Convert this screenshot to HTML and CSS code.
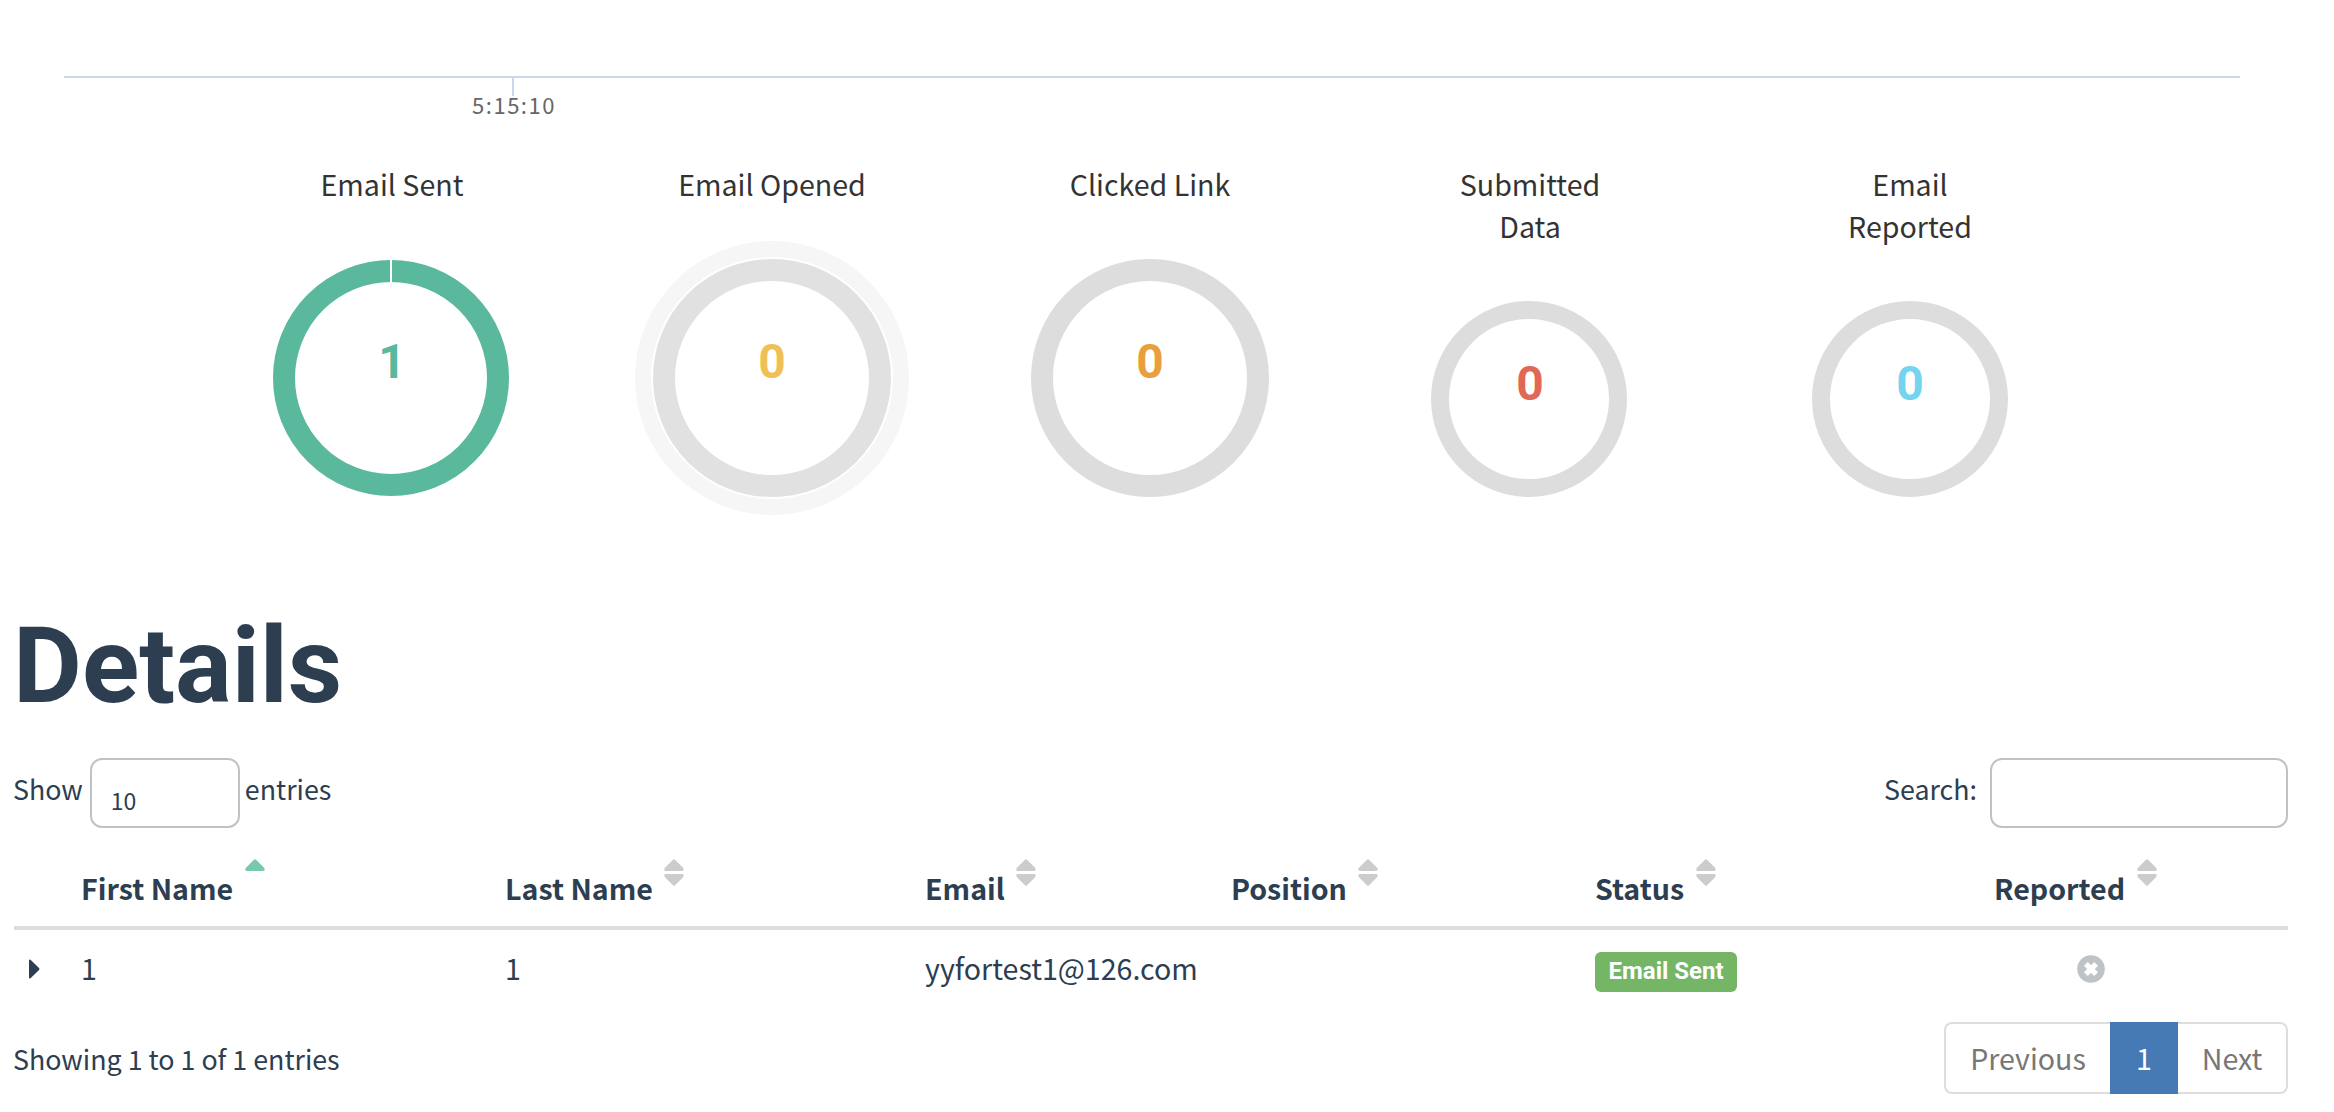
FILE: index.html
```html
<!DOCTYPE html>
<html lang="en">
<head>
<meta charset="utf-8">
<title>Campaign Results</title>
<link rel="stylesheet" href="styles.css">
</head>
<body>
<svg class="timeline" viewBox="0 0 2334 140">
  <path class="axis" d="M64 77H2240M513 78V96"/>
  <text class="tick" x="514" y="114">5:15:10</text>
</svg>

<section class="charts">
  <svg class="chart" viewBox="0 0 380 400">
    <text class="chart-title" x="191" y="56">Email Sent</text>
    <circle class="ring sent" cx="190" cy="238" r="107" stroke-width="22"/>
    <path class="ring-seam" d="M190 119V142"/>
    <text class="count c-sent" x="191" y="238">1</text>
  </svg>
  <svg class="chart" viewBox="0 0 380 400">
    <text class="chart-title" x="191" y="56">Email Opened</text>
    <circle class="ring halo" cx="191" cy="238" r="129" stroke-width="16"/>
    <circle class="ring hover" cx="191" cy="238" r="108" stroke-width="22"/>
    <text class="count c-opened" x="191" y="238">0</text>
  </svg>
  <svg class="chart" viewBox="0 0 380 400">
    <text class="chart-title" x="189" y="56">Clicked Link</text>
    <circle class="ring" cx="189" cy="238" r="108" stroke-width="22"/>
    <text class="count c-clicked" x="189" y="238">0</text>
  </svg>
  <svg class="chart" viewBox="0 0 380 400">
    <text class="chart-title" x="189" y="56">Submitted<tspan x="189" dy="42">Data</tspan></text>
    <circle class="ring" cx="188" cy="259" r="89" stroke-width="18"/>
    <text class="count c-submitted" x="189" y="260">0</text>
  </svg>
  <svg class="chart" viewBox="0 0 380 400">
    <text class="chart-title" x="189" y="56">Email<tspan x="189" dy="42">Reported</tspan></text>
    <circle class="ring" cx="189" cy="259" r="89" stroke-width="18"/>
    <text class="count c-reported" x="189" y="260">0</text>
  </svg>
</section>

<main class="details">
  <h1 class="heading">Details</h1>

  <div class="controls">
    <label class="length">Show <span class="select">10</span> entries</label>
    <label class="search">Search: <input class="search-box" type="text"></label>
  </div>

  <table class="results">
    <colgroup><col class="w-toggle"><col class="w-first"><col class="w-last"><col class="w-email"><col class="w-position"><col class="w-status"><col class="w-reported"></colgroup>
    <thead>
      <tr>
        <th></th>
        <th>First Name<svg class="sort asc" viewBox="0 0 20 28"><path d="M9 .8Q10 -.4 11 .8L19.300 9Q20.500 12 18 12H2Q-.5 12 .7 9Z"/></svg></th>
        <th>Last Name<svg class="sort" viewBox="0 0 20 28"><path d="M9 .8Q10 -.4 11 .8L19.300 9Q20.500 12 18 12H2Q-.5 12 .7 9ZM9 26.200Q10 27.400 11 26.200L19.300 18Q20.500 15 18 15H2Q-.5 15 .7 18Z"/></svg></th>
        <th>Email<svg class="sort" viewBox="0 0 20 28"><path d="M9 .8Q10 -.4 11 .8L19.300 9Q20.500 12 18 12H2Q-.5 12 .7 9ZM9 26.200Q10 27.400 11 26.200L19.300 18Q20.500 15 18 15H2Q-.5 15 .7 18Z"/></svg></th>
        <th>Position<svg class="sort" viewBox="0 0 20 28"><path d="M9 .8Q10 -.4 11 .8L19.300 9Q20.500 12 18 12H2Q-.5 12 .7 9ZM9 26.200Q10 27.400 11 26.200L19.300 18Q20.500 15 18 15H2Q-.5 15 .7 18Z"/></svg></th>
        <th>Status<svg class="sort" viewBox="0 0 20 28"><path d="M9 .8Q10 -.4 11 .8L19.300 9Q20.500 12 18 12H2Q-.5 12 .7 9ZM9 26.200Q10 27.400 11 26.200L19.300 18Q20.500 15 18 15H2Q-.5 15 .7 18Z"/></svg></th>
        <th>Reported<svg class="sort" viewBox="0 0 20 28"><path d="M9 .8Q10 -.4 11 .8L19.300 9Q20.500 12 18 12H2Q-.5 12 .7 9ZM9 26.200Q10 27.400 11 26.200L19.300 18Q20.500 15 18 15H2Q-.5 15 .7 18Z"/></svg></th>
      </tr>
    </thead>
    <tbody>
      <tr>
        <td class="toggle"><svg class="caret" viewBox="0 0 11 20"><path d="M0 1.500Q0 0 1.500 .8L10 9Q11 10 10 11L1.500 19.200Q0 20 0 18.500Z"/></svg></td>
        <td>1</td>
        <td>1</td>
        <td>yyfortest1@126.com</td>
        <td></td>
        <td><span class="badge">Email Sent</span></td>
        <td class="reported"><svg class="cross" viewBox="0 0 28 28"><circle cx="14" cy="14" r="13.800"/><path d="M8.900 8.900 19.100 19.100M19.100 8.900 8.900 19.100"/></svg></td>
      </tr>
    </tbody>
  </table>

  <div class="footer">
    <div class="info">Showing 1 to 1 of 1 entries</div>
    <nav class="pager"><a class="page prev">Previous</a><a class="page active">1</a><a class="page next">Next</a></nav>
  </div>
</main>
</body>
</html>
```
FILE: styles.css
```css
* { box-sizing: border-box; }
body {
  margin: 0;
  background: #fff;
  color: #2c3e50;
  font: 26.8px/42px "Noto Sans CJK SC", "Noto Sans", sans-serif;
}
svg { display: block; }

.timeline { width: 2334px; height: 140px; }
.axis { fill: none; stroke: #ccd6eb; stroke-width: 2; }
.tick { font-size: 22px; letter-spacing: 1.5px; fill: #666; text-anchor: middle; }

.charts { display: flex; padding-left: 201px; height: 471px; }
.chart { width: 380px; height: 400px; }
.chart-title { font-size: 28.6px; fill: #333; text-anchor: middle; }
.ring { fill: none; stroke: #ddd; }
.ring.sent { stroke: #5ab89d; }
.ring.hover { stroke: #e1e1e1; }
.ring.halo { stroke: #f6f6f6; }
.ring-seam { stroke: #fff; stroke-width: 2; }
.count { font: bold 48px Roboto, sans-serif; text-anchor: middle; }
.c-sent { fill: #5ab89d; }
.c-opened { fill: #f0c057; }
.c-clicked { fill: #e89f3c; }
.c-submitted { fill: #e16756; }
.c-reported { fill: #72d4ee; }

.details { width: 2274px; margin-left: 14px; }
.heading { margin: 0 0 0 -1px; height: 147px; font: bold 106px/110px Roboto, sans-serif; }

.controls { display: flex; justify-content: space-between; height: 90px; }
.length, .search { display: flex; height: 70px; line-height: 62px; }
.length { margin-left: -1px; }
.select, .search-box { height: 70px; border: 2px solid #bdc3c7; border-radius: 12px; background: #fff; }
.select { width: 150px; margin: 0 5px 0 7px; padding: 9px 0 0 19px; font-size: 23px; }
.search-box { width: 298px; margin-left: 13px; }

.results { width: 2274px; table-layout: fixed; border-collapse: collapse; font-size: 28.6px; }
.w-toggle { width: 67px; }
.w-first { width: 424px; }
.w-last { width: 420px; }
.w-email { width: 306px; }
.w-position { width: 364px; }
.w-status { width: 399px; }
th, td { padding: 0; text-align: left; white-space: nowrap; }
th { height: 80px; padding-bottom: 7px; border-bottom: 4px solid #ddd; }
.sort { display: inline-block; width: 20px; height: 28px; margin-left: 11.5px; vertical-align: 13px; fill: #ccc; }
.sort.asc { fill: #78c7b1; }
td { height: 76px; padding-top: 2px; }
.caret { width: 11px; height: 20px; margin: 1px 0 0 15px; fill: #2c3e50; }
.badge {
  display: inline-block;
  height: 40px;
  margin-top: 4px;
  padding: 0 13.5px;
  border-radius: 6px;
  background: #74b566;
  color: #fff;
  font: bold 24px/39px Roboto, sans-serif;
  vertical-align: middle;
}
.cross { width: 28px; height: 28px; margin: 1px 0 0 83px; }
.cross circle { fill: #bdc3c7; }
.cross path { stroke: #fff; stroke-width: 5.4; }

.footer { display: flex; justify-content: space-between; margin-top: 18px; }
.info { margin-left: -1px; line-height: 74px; }
.pager { display: flex; height: 72px; font-size: 28.6px; line-height: 67px; color: #777; }
.page { border: 2px solid #ddd; text-align: center; }
.prev { width: 166px; border-right: 0; border-radius: 8px 0 0 8px; }
.active { width: 68px; border-color: #467ab5; background: #467ab5; color: #fff; }
.next { width: 110px; border-left: 0; border-radius: 0 8px 8px 0; }
```
